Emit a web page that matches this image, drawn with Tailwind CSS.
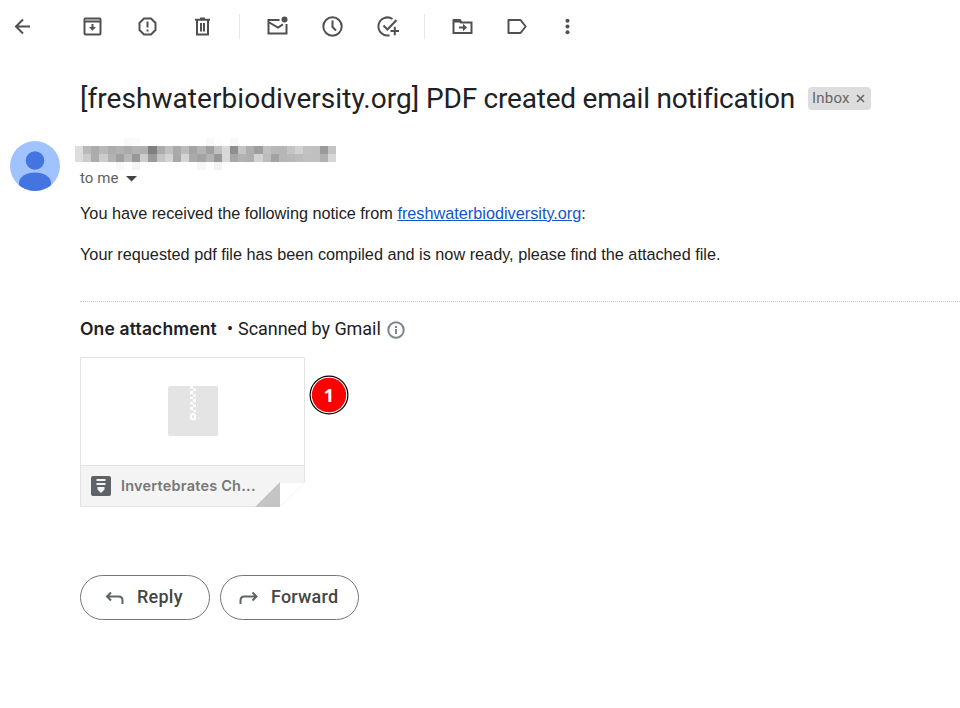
<!DOCTYPE html>
<html lang="en"><head><meta charset="utf-8"><title>Mail</title>
<script src="https://cdn.jsdelivr.net/npm/@tailwindcss/browser@4"></script></head>
<body class="bg-white w-[960px] h-[708px] overflow-hidden font-['Liberation_Sans',sans-serif] text-[#202124]">
<header class="flex items-center h-[52px] pl-[10px] text-[#505050]">
<svg class="w-[24px] h-[24px]" viewBox="0 0 24 24" fill="none" stroke="currentColor" stroke-width="2"><path d="M20 12.500H6.500M13 5.500l-7 7 7 7"/></svg>
<svg class="w-[24px] h-[24px] ml-[46px]" viewBox="0 0 24 24" fill="none" stroke="currentColor" stroke-width="2"><rect x="4.500" y="4.500" width="16" height="16" rx="1"/><path d="M4.500 7.500h16M12.500 10v5"/><path d="M9 13h7l-3.500 3.800z" fill="currentColor" stroke="none"/><path d="M5 6h15" stroke="#999" stroke-width="1"/></svg>
<svg class="w-[24px] h-[24px] ml-[31px]" viewBox="0 0 24 24" fill="none" stroke="currentColor" stroke-width="2"><path d="M9 4.500h7l4.500 4.500v7L16 20.500H9L4.500 16V9zM12.500 7.500v6M12.500 15.500v2"/></svg>
<svg class="w-[24px] h-[24px] ml-[31px]" viewBox="0 0 24 24" fill="none" stroke="currentColor" stroke-width="2"><path d="M5 5.800h15M10 4.500h5M7 5.500v15h11v-15M11 9v8.500M14 9v8.500"/></svg>
<div class="w-px h-[25px] bg-[#e8e8e8] ml-[25px]"></div>
<svg class="w-[24px] h-[24px] ml-[25px]" viewBox="0 0 24 24" fill="none" stroke="currentColor" stroke-width="2"><path d="M14.500 6H3.500v13.500h18V10M3.500 8l9.500 5.500 5-3.200"/><circle cx="19.500" cy="5.500" r="3" fill="currentColor" stroke="none"/></svg>
<svg class="w-[24px] h-[24px] ml-[31px]" viewBox="0 0 24 24" fill="none" stroke="currentColor" stroke-width="2"><circle cx="12.500" cy="12.500" r="9.200"/><path d="M12.500 6.500v6.500l3.500 3.500"/></svg>
<svg class="w-[24px] h-[24px] ml-[31px]" viewBox="0 0 24 24" fill="none" stroke="currentColor" stroke-width="2"><path d="M17.500 5a9 9 0 1 0-3 16.200M8.500 11.500l4 4L21.500 6M15.500 17h8.500M19.800 12.800v8.500"/></svg>
<div class="w-px h-[25px] bg-[#e8e8e8] ml-[25px]"></div>
<svg class="w-[24px] h-[24px] ml-[25px]" viewBox="0 0 24 24" fill="none" stroke="currentColor" stroke-width="2"><path d="M3.500 19V6.500h5.500l2 2h10.500V19zM9 13.500h6"/><path d="M3 5h7.500l2 3.500H3zM13 9.800l4 3.700-4 3.700z" fill="currentColor" stroke="none"/></svg>
<svg class="w-[24px] h-[24px] ml-[31px]" viewBox="0 0 24 24" fill="none" stroke="currentColor" stroke-width="2"><path d="M3.500 6h12l5.200 6.500-5.200 6.500h-12z" stroke-linejoin="round"/></svg>
<svg class="w-[24px] h-[24px] ml-[26px]" viewBox="0 0 24 24" fill="currentColor"><circle cx="12.500" cy="6.800" r="2"/><circle cx="12.500" cy="12.500" r="2"/><circle cx="12.500" cy="18.200" r="2"/></svg>
</header>
<main>
<div class="flex items-center pl-[80px] pt-[28px] h-[64px]">
<h1 class="w-[728px] pt-[2px] whitespace-nowrap font-[Roboto,sans-serif] text-[28px] leading-[36px]"><span class="tracking-[.06px]">[freshwaterbiodiversity.org]</span><span class="tracking-[-.22px]"> PDF created email notification</span></h1>
<div class="flex items-center w-[63px] h-[23px] rounded-[4px] bg-[#dddddd] pl-[4px] text-[#666] font-[Roboto,sans-serif] text-[15px]"><span class="w-[44px] tracking-[.2px]">Inbox</span><svg class="w-[9px] h-[9px] mt-[1px]" viewBox="0 0 9 9" stroke="#666" stroke-width="1.500"><path d="M1 1l7 7M8 1L1 8"/></svg></div>
</div>
<div class="flex h-[75px] pt-[22px] pl-[10px]">
<svg class="w-[50px] h-[50px] mt-[3px] shrink-0" viewBox="0 0 50 50"><defs><clipPath id="a"><circle cx="25" cy="25" r="25"/></clipPath></defs><g clip-path="url(#a)"><path fill="#a0c2ff" d="M0 0h50v50H0z"/><circle cx="25" cy="19.500" r="9.300" fill="#4374e0"/><path fill="#4374e0" d="M9 50v-8c0-6 7-10.500 16-10.500S41 36 41 42v8z"/></g></svg>
<div class="ml-[15px]">
<div id="sender" class="grid grid-cols-[repeat(32,minmax(0,1fr))] grid-rows-[repeat(4,8px)] w-[261px]"></div>
<div class="flex items-center h-[16px] ml-[5px] text-[#5e5e5e] font-[Roboto,sans-serif] text-[15px]"><span class="w-[46px] tracking-[.1px]">to me</span><svg class="w-[11px] h-[6px] mt-[2px]" viewBox="0 0 11 6"><path d="M0 0h11L5.500 5.500z" fill="#444"/></svg></div>
</div></div>
<div class="pl-[80px] text-[16.25px] leading-[20px] text-[#222]">
<p class="pt-[12px]">You have received the following notice from <a class="text-[#1155cc] underline">freshwaterbiodiversity.org</a>:</p>
<p class="pt-[21px]">Your requested pdf file has been compiled and is now ready, please find the attached file.</p>
</div>
<section class="ml-[80px] mt-[37px] border-t border-dotted border-[#c8c8c8]">
<div class="flex items-center h-[55px] pb-[2px] font-[Roboto,sans-serif] text-[18px]"><span class="w-[147px] pt-[2px] whitespace-nowrap font-[Inter,sans-serif] font-semibold text-[17.500px] tracking-[.15px]">One attachment</span><span class="w-[11px]">•</span><span class="w-[149px] tracking-[-.05px]">Scanned by Gmail</span>
<svg class="w-[18px] h-[18px] mt-[3px]" viewBox="0 0 18 18" fill="none" stroke="#80868b" stroke-width="2"><circle cx="9" cy="9" r="7.700"/><path d="M9 8v5M9 5v2"/></svg></div>
<div class="flex">
<svg class="w-[225px] h-[150px]" viewBox="0 0 225 150"><path d="M.5 .5h224v125l-24 24H.5z" fill="#fff" stroke="#e3e3e3"/><path d="M1 109h223v17h-24v23H1z" fill="#f4f4f4"/><path d="M1 108.500h223" stroke="#e0e0e0"/><path d="M200 126h25l-25 24z" fill="#fff"/><path d="M200 149.500l24-24" stroke="#f5f5f5"/><path d="M175 150l25-25v25z" fill="#c4c4c4"/>
<rect x="88" y="29" width="50" height="50" rx="2" fill="#e4e4e4"/><path d="M110 29h3v2.500h-3zm3 2.500h3v2.500h-3zm-3 2.500h3v3h-3zm3 3h3v3h-3zm-3 3h3v2h-3zm3 2h3v3h-3zm-3 3h3v2h-3zm3 2h3v3h-3zm-3 3h3v3h-3zm3 3h3v2h-3z" fill="#fff"/><rect x="111" y="57" width="4" height="5.500" rx="2" fill="none" stroke="#fff" stroke-width="2"/>
<rect x="11" y="119" width="20" height="20" rx="2" fill="#5f6368"/><path d="M16.500 122h9v2h-9zm0 4h9v2h-9zM17.500 130h7v2.500l-3.500 3.500-3.500-3.500z" fill="#f3f3f3"/>
<text x="41" y="134" textLength="134.500" fill="#777" class="font-[Inter,sans-serif] text-[14.500px] font-semibold">Invertebrates Ch...</text></svg>
<svg class="w-[40px] h-[40px] ml-[4px] mt-[18px]" viewBox="0 0 40 40"><circle cx="20" cy="20" r="19.500" fill="#000"/><circle cx="20" cy="20" r="18.300" fill="#fff"/><circle cx="20" cy="20" r="17.200" fill="red"/><text x="20" y="26.500" text-anchor="middle" fill="#fff" class="font-['Open_Sans',sans-serif] text-[18px] font-bold">1</text></svg>
</div></section>
<div class="flex gap-[10px] pl-[80px] mt-[68px] font-[Roboto,sans-serif] font-medium text-[18px] text-[#444746]">
<button class="flex items-center w-[130px] h-[45px] border border-[#747775] rounded-full pl-[24px]"><svg class="w-[20px] h-[20px] mr-[12px]" viewBox="0 0 20 20" fill="none" stroke="#5f6368" stroke-width="2"><path d="M6 4.500L2 8.500l4 4M2 8.500H13.500q4 0 4 4V16"/></svg><span class="pb-[2px] tracking-[.25px]">Reply</span></button>
<button class="flex items-center w-[139px] h-[45px] border border-[#747775] rounded-full pl-[18px]"><svg class="w-[20px] h-[20px] mr-[12px]" viewBox="0 0 20 20" fill="none" stroke="#5f6368" stroke-width="2"><path d="M13.500 4.500l4 4-4 4M17.500 8.500H5.500q-4 0-4 4V16"/></svg><span class="pb-[2px] tracking-[.2px]">Forward</span></button>
</div>
</main>
<script>
// Grey level of each cell of the redacted sender name
const rows = [
 'ff ff ff ff ff ff f9 fb ff ff ff ff ff ff ff ff f8 fd ff f8 ff ff ff ff ff ff ff ff ff ff ff ff',
 'dd b8 ac b8 ac b2 aa b2 b0 80 ac c0 aa bc a4 b4 a0 c0 d8 8e c4 ae 9e c0 b8 b6 c4 d2 c2 c0 9a c4',
 'dd cc ac cc b2 a0 b8 98 cc 9a c4 d4 a8 d4 aa a2 b2 98 d8 a6 b2 ae d2 bc a2 b6 b8 bc c0 c0 b0 d6',
 'ff ff ff ff ff f8 ff f4 ff ff ff ff ff ff ff f6 ff f3 ff ff ff ff ff ff ff ff ff ff ff ff ff ff'];
const sender = document.getElementById('sender');
rows.join(' ').split(' ').forEach(v => {
  const cell = document.createElement('i');
  cell.style.background = '#' + v + v + v;
  sender.append(cell);
});
</script>
</body></html>
